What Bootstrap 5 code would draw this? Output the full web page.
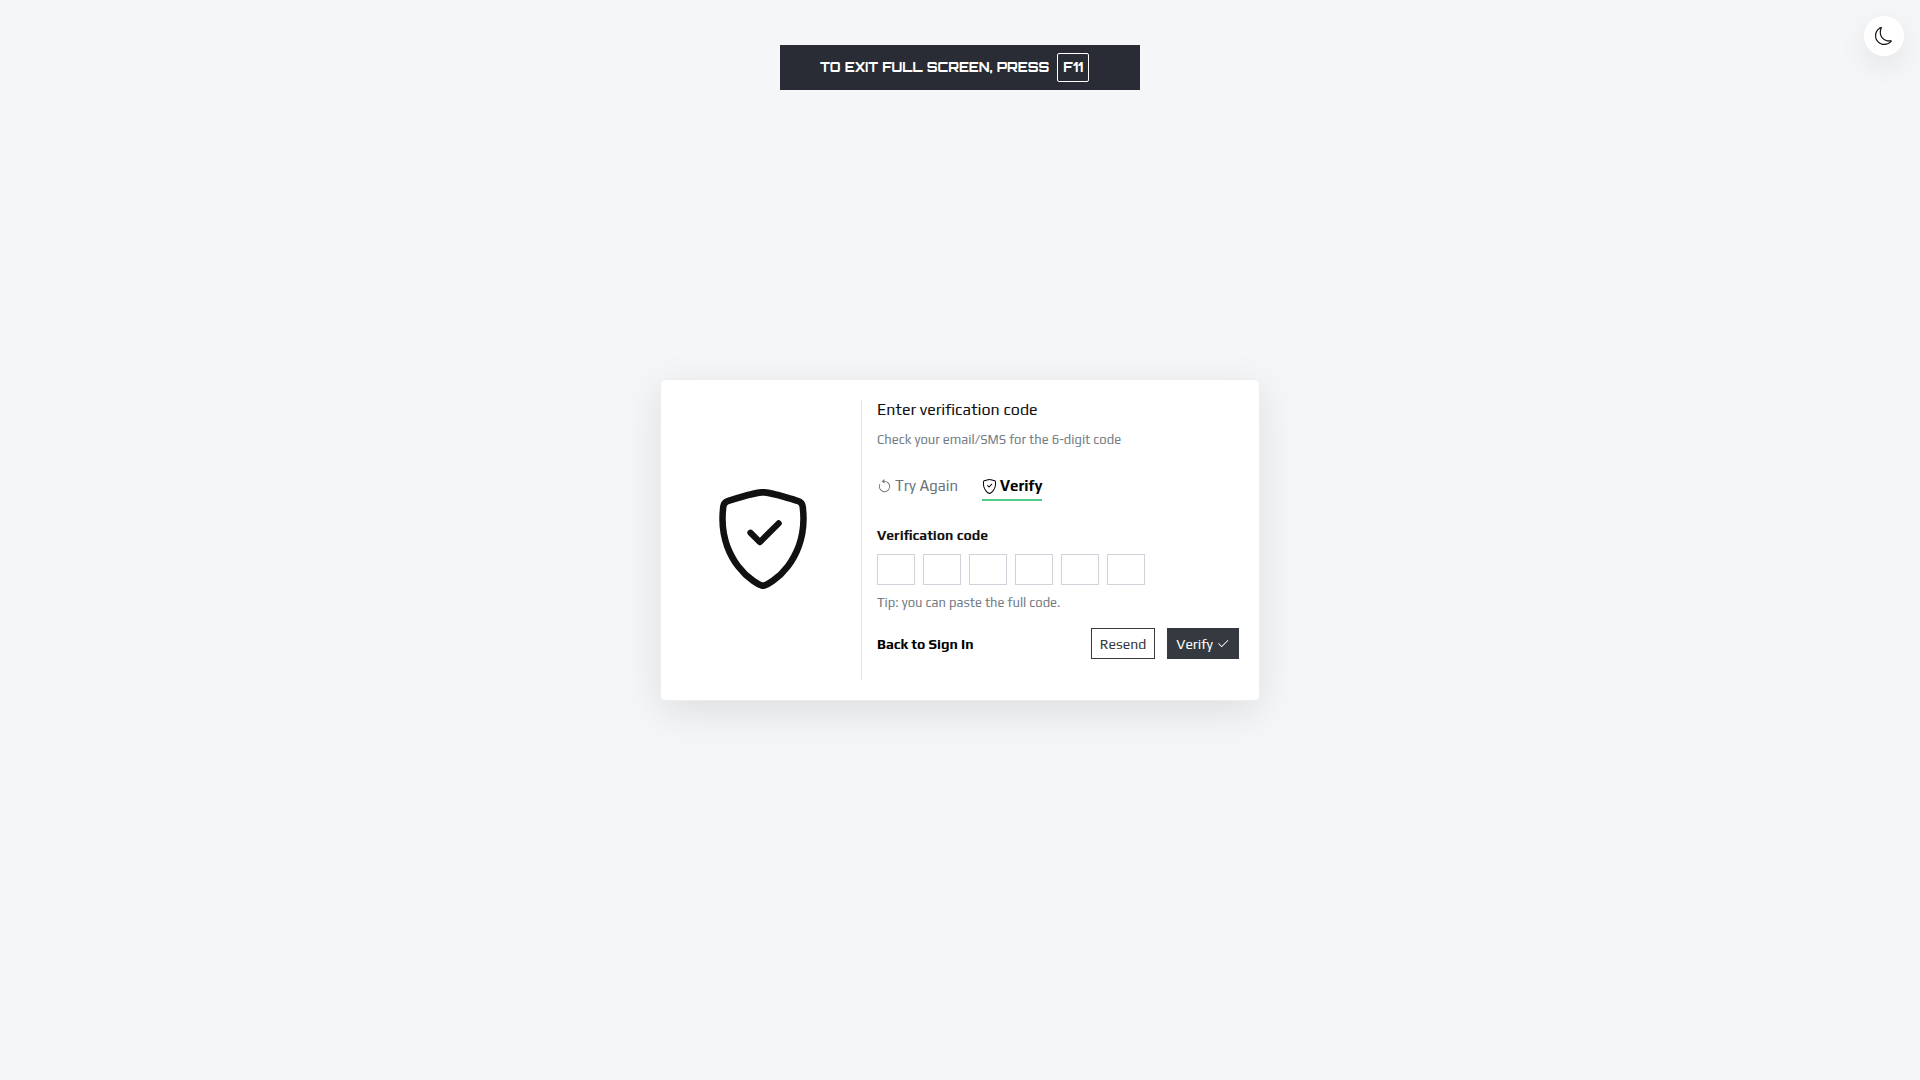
<!DOCTYPE html>
<html lang="en">
<head>
<meta charset="utf-8">
<meta name="viewport" content="width=device-width, initial-scale=1">
<title>Verify</title>
<link href="https://cdn.jsdelivr.net/npm/bootstrap@5.3.0/dist/css/bootstrap.min.css" rel="stylesheet">
<style>
body{background:#f4f6f8;color:#111;font-family:Play,Roboto,sans-serif;font-size:14px;line-height:20px}
a{text-decoration:none}
.exit-hint{top:45px;width:360px;height:45px;padding-left:40px;gap:8px;background:#292c34;color:#fff;font:800 13px/19px Orbitron,Inter,sans-serif}
.exit-hint kbd{padding:4px 5px;border:1px solid #fff;border-radius:2px;background:none;font:inherit}
.theme-toggle{width:40px;height:40px;background:#fff;color:#111;border:0;box-shadow:0 10px 30px rgba(0,0,0,.08)}
.verify-card{max-width:600px;padding:20px;border-color:#ebedef;border-radius:5px;box-shadow:0 10px 40px rgba(0,0,0,.1)}
.brand-side{width:180px;padding:0 16px 2px 0}
.form-side{min-height:280px;padding-left:15px;border-left:1px solid #dee2e6}
.soft{color:#747d86;font-size:13px;margin-bottom:15px}
.form-side h1{font-size:16px;line-height:20px;font-weight:400;margin-bottom:10px}
.step-tabs{gap:24px;font-size:15px;margin-top:26px}
.step-tabs a{gap:3px;color:#6c757d;padding-bottom:3px;border-bottom:2px solid transparent}
.step-tabs a.active{color:#000;font-weight:700;border-color:#50cd89}
.code-label{margin-bottom:9px}
.code-box{width:38px;height:31px;padding:0;border-radius:0;border-color:#ced4da;text-align:center}
.btn-flat{height:31px;padding:0 8px;border-radius:0;font-size:14px;line-height:20px;--bs-btn-border-color:#343a40}
.btn-line{color:#343a40;background:#fff}
.btn-fill{gap:3px;color:#fff;background:#343a40}
</style>
</head>
<body>
<div class="exit-hint position-fixed start-50 translate-middle-x d-flex align-items-center text-nowrap">
  <span>TO EXIT FULL SCREEN, PRESS</span><kbd>F11</kbd>
</div>
<button type="button" class="theme-toggle position-fixed top-0 end-0 m-3 p-0 rounded-circle d-flex align-items-center justify-content-center" aria-label="Toggle dark mode">
  <svg width="18" height="18" viewBox="0 0 16 16" fill="currentColor"><path d="M6 .278a.768.768 0 0 1 .08.858 7.208 7.208 0 0 0-.878 3.46c0 4.021 3.278 7.277 7.318 7.277.527 0 1.04-.055 1.533-.16a.787.787 0 0 1 .81.316.733.733 0 0 1-.031.893A8.349 8.349 0 0 1 8.344 16C3.734 16 0 12.286 0 7.71 0 4.266 2.114 1.312 5.124.06A.752.752 0 0 1 6 .278zM4.858 1.311A7.269 7.269 0 0 0 1.025 7.71c0 4.02 3.279 7.276 7.319 7.276a7.316 7.316 0 0 0 5.205-2.162c-.337.042-.68.063-1.029.063-4.61 0-8.343-3.714-8.343-8.29 0-1.167.242-2.278.681-3.286z"/></svg>
</button>
<svg class="d-none">
  <symbol id="shield" viewBox="0 0 16 16"><path d="M5.338 1.59a61.44 61.44 0 0 0-2.837.856.481.481 0 0 0-.328.39c-.554 4.157.726 7.19 2.253 9.188a10.725 10.725 0 0 0 2.287 2.233c.346.244.652.42.893.533.12.057.218.095.293.118a.55.55 0 0 0 .101.025.615.615 0 0 0 .1-.025c.076-.023.174-.061.294-.118.24-.113.547-.29.893-.533a10.726 10.726 0 0 0 2.287-2.233c1.527-1.997 2.807-5.031 2.253-9.188a.48.48 0 0 0-.328-.39c-.651-.213-1.75-.56-2.837-.855C9.552 1.29 8.531 1.067 8 1.067c-.53 0-1.552.223-2.662.524zM5.072.56C6.157.265 7.31 0 8 0s1.843.265 2.928.56c1.11.3 2.229.655 2.887.87a1.54 1.54 0 0 1 1.044 1.262c.596 4.477-.787 7.795-2.465 9.99a11.775 11.775 0 0 1-2.517 2.453 7.159 7.159 0 0 1-1.048.625c-.28.132-.581.24-.829.24s-.548-.108-.829-.24a7.158 7.158 0 0 1-1.048-.625 11.777 11.777 0 0 1-2.517-2.453C1.928 10.487.545 7.169 1.141 2.692A1.54 1.54 0 0 1 2.185 1.43 62.456 62.456 0 0 1 5.072.56z"/><path d="M10.854 5.146a.5.5 0 0 1 0 .708l-3 3a.5.5 0 0 1-.708 0l-1.5-1.5a.5.5 0 1 1 .708-.708L7.5 7.793l2.646-2.647a.5.5 0 0 1 .708 0z"/></symbol>
</svg>
<main class="min-vh-100 d-flex align-items-center justify-content-center">
  <div class="card verify-card w-100 flex-row">
    <div class="brand-side flex-shrink-0 d-flex align-items-center justify-content-center">
      <svg width="100" height="100" fill="#111"><use href="#shield"/></svg>
    </div>
    <form class="form-side flex-grow-1">
      <h1>Enter verification code</h1>
      <p class="soft mb-0">Check your email/SMS for the 6-digit code</p>
      <nav class="step-tabs d-flex">
        <a href="#" class="d-flex align-items-center"><svg width="15" height="15" viewBox="0 0 16 16" fill="currentColor"><path fill-rule="evenodd" d="M8 3a5 5 0 1 1-4.546 2.914.5.5 0 0 0-.908-.417A6 6 0 1 0 8 2v1z"/><path d="M8 4.466V.534a.25.25 0 0 0-.41-.192L5.23 2.308a.25.25 0 0 0 0 .384l2.36 1.966A.25.25 0 0 0 8 4.466z"/></svg>Try Again</a>
        <a href="#" class="active d-flex align-items-center"><svg width="15" height="15" fill="currentColor"><use href="#shield"/></svg>Verify</a>
      </nav>
      <label class="code-label d-block fw-bold mt-4" for="digit1">Verification code</label>
      <div class="d-flex gap-2 mb-2">
        <input id="digit1" class="form-control code-box" maxlength="1">
        <input class="form-control code-box" maxlength="1" aria-label="Digit 2">
        <input class="form-control code-box" maxlength="1" aria-label="Digit 3">
        <input class="form-control code-box" maxlength="1" aria-label="Digit 4">
        <input class="form-control code-box" maxlength="1" aria-label="Digit 5">
        <input class="form-control code-box" maxlength="1" aria-label="Digit 6">
      </div>
      <p class="soft">Tip: you can paste the full code.</p>
      <div class="d-flex align-items-center">
        <a href="#" class="fw-bold text-black me-auto">Back to Sign In</a>
        <button type="button" class="btn btn-flat btn-line me-2">Resend</button>
        <button type="submit" class="btn btn-flat btn-fill d-flex align-items-center ms-1">Verify <svg width="14" height="14" viewBox="0 0 16 16" fill="currentColor"><path d="M13.854 3.646a.5.5 0 0 1 0 .708l-7 7a.5.5 0 0 1-.708 0l-3.5-3.5a.5.5 0 1 1 .708-.708L6.5 10.293l6.646-6.647a.5.5 0 0 1 .708 0z"/></svg></button>
      </div>
    </form>
  </div>
</main>
<script src="https://cdn.jsdelivr.net/npm/bootstrap@5.3.0/dist/js/bootstrap.bundle.min.js"></script>
</body>
</html>
